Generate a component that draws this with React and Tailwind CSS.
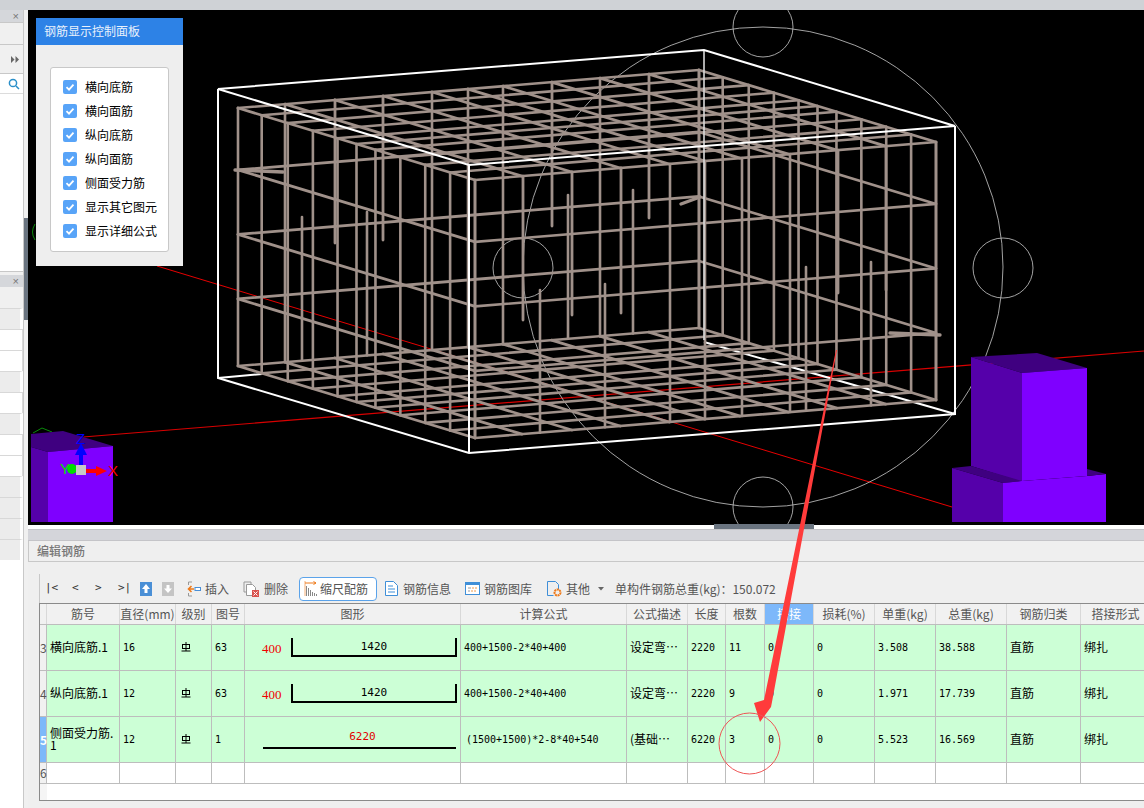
import React from "react";

const CJK = { fontFamily: '"Noto Sans CJK SC","Noto Sans",sans-serif' };
const MONO = { fontFamily: '"DejaVu Sans Mono","Noto Sans CJK SC",monospace' };

const A = [238, 108], U = [237, 72], V = [461, -38], H = 258;
const P = (u, v, w) => [A[0] + u * U[0] + v * V[0], A[1] + u * U[1] + v * V[1] + w * H];
const uList = [0, 0.1, 0.21, 0.316, 0.42, 0.5, 0.58, 0.685, 0.79, 0.895, 1];
const vList = [0, 0.102, 0.21, 0.315, 0.421, 0.499, 0.575, 0.68, 0.785, 0.891, 1];

function cageLines() {
  const out = [];
  const seg = (a, b, k = 2.6) => out.push([a[0], a[1], b[0], b[1], k]);
  // mats: top and bottom
  for (const w of [0, 1]) {
    for (const u of uList) seg(P(u, 0, w), P(u, 1, w));
    for (const v of vList) seg(P(0, v, w), P(1, v, w), 2.8);
  }
  // rings
  for (const w of [0.24, 0.49, 0.74]) {
    seg(P(0, 0, w), P(1, 0, w), 2.8);
    seg(P(1, 0, w), P(1, 1, w));
    seg(P(1, 1, w), P(0, 1, w));
    seg(P(0, 1, w), P(0, 0, w), 2.8);
  }
  // rods on side faces
  for (const u of uList) {
    seg(P(u, 0, 0), P(u, 0, 1), 2.6);
    seg(P(u, 1, 0), P(u, 1, 1), 2.6);
  }
  const backTop = (x) => 108 - ((x - 238) * 38) / 461;
  const backBot = (x) => backTop(x) + H;
  const frontTop = (x) => 180 - ((x - 475) * 38) / 461;
  const frontBot = (x) => frontTop(x) + H;
  for (const x of [285, 432, 468, 503, 600, 699]) seg([x, backTop(x)], [x, backBot(x)]);
  for (const [x, e] of [[335, 243], [383, 240], [552, 226], [649, 218]]) seg([x, backTop(x)], [x, e], 2.8);
  for (const x of [475, 670, 705, 742, 790, 936]) seg([x, frontTop(x)], [x, frontBot(x)], 2.6);
  for (const [x, e] of [[523, 320], [572, 315], [621, 313], [838, 293], [886, 290]]) seg([x, frontTop(x)], [x, e], 2.8);
  for (const [x, s] of [[302, 217], [367, 212], [568, 195], [633, 190]]) seg([x, s], [x, backBot(x)], 2.6);
  for (const [x, s] of [[540, 290], [605, 284], [806, 267], [871, 262]]) seg([x, s], [x, frontBot(x)], 2.6);
  // stubs
  seg([235, 170], [283, 172], 3.4);
  seg([681, 204], [700, 197], 3.4);
  seg([890, 333], [940, 335], 3.4);
  return out;
}

function Scene() {
  const lines = cageLines();
  return (
    <svg width="1116" height="515" viewBox="28 10 1116 515" className="absolute inset-0">
      <line x1="157" y1="266" x2="952" y2="507" stroke="#e60000" strokeWidth="1" />
      <line x1="83" y1="437" x2="1144" y2="351" stroke="#d80000" strokeWidth="1.2" />
      <g fill="none" stroke="#b4b4b4" strokeWidth="0.9">
        <circle cx="763" cy="267" r="240" />
        <circle cx="763" cy="27" r="30" />
        <circle cx="763" cy="507" r="30" />
        <circle cx="523" cy="268" r="30" />
        <circle cx="1003" cy="268" r="30" />
      </g>
      <g stroke="#fff" strokeWidth="2">
        <line x1="218" y1="378" x2="262" y2="374" />
        <line x1="704" y1="342" x2="955" y2="414" />
      </g>
      <g stroke="#a0918a" strokeLinecap="round">
        {lines.map((l, i) => (
          <line key={i} x1={l[0]} y1={l[1]} x2={l[2]} y2={l[3]} strokeWidth={l[4]} />
        ))}
      </g>
      <line x1="704" y1="50" x2="704" y2="340" stroke="#d8d8d8" strokeWidth="1.6" />
      <g stroke="#fff" strokeWidth="2" fill="none" strokeLinejoin="miter">
        <polygon points="218,89 704,50 955,126 469,165" />
        <polyline points="218,89 218,378 469,453 955,414 955,126" />
        <line x1="469" y1="165" x2="469" y2="453" />
      </g>
      {/* right purple column */}
      <polygon points="971,357 1037,353 1087,368 1022,373" fill="#3f0080" />
      <polygon points="971,357 1022,373 1022,482 971,466" fill="#5500aa" />
      <polygon points="1022,373 1087,368 1087,476 1022,481" fill="#7f00ff" />
      <polygon points="952,468 971,466 1022,481 1003,483" fill="#3f0080" />
      <polygon points="952,468 1003,483 1003,522 952,522" fill="#5500aa" />
      <polygon points="1003,483 1022,481 1087,476 1106,474 1106,522 1003,522" fill="#7f00ff" />
      <polygon points="1087,469 1106,474 1087,476" fill="#3f0080" />
      {/* left purple column */}
      <polyline points="33,433 42,428 52,432" fill="none" stroke="#0a8a0a" strokeWidth="1" />
      <path d="M35 224 Q30 232 35 240" fill="none" stroke="#0a8a0a" strokeWidth="1" />
      <polygon points="31,434 63,431 113,446 48,452 31,447" fill="#3f0080" />
      <polygon points="31,447 48,452 48,522 31,522" fill="#5500aa" />
      <polygon points="48,452 113,446 113,522 48,522" fill="#7f00ff" />
      {/* axes */}
      <rect x="79" y="454" width="4" height="14" fill="#0000ff" />
      <polygon points="81,443 75,455 87,455" fill="#0000ff" />
      <rect x="86" y="469" width="12" height="4" fill="#ff0000" />
      <polygon points="107,471 96,466 96,476" fill="#ff0000" />
      <circle cx="72" cy="469" r="5" fill="#00e000" />
      <rect x="76" y="465" width="10" height="10" fill="#c8c8c8" />
      <text x="76" y="444" fontSize="15" fill="#0000ff" style={{ fontFamily: '"Liberation Sans",sans-serif' }}>Z</text>
      <text x="108" y="476" fontSize="15" fill="#ff0000" style={{ fontFamily: '"Liberation Sans",sans-serif' }}>X</text>
      <text x="60" y="474" fontSize="15" fill="#00e000" style={{ fontFamily: '"Liberation Sans",sans-serif' }}>Y</text>
    </svg>
  );
}

function ControlPanel() {
  const items = ["横向底筋", "横向面筋", "纵向底筋", "纵向面筋", "侧面受力筋", "显示其它图元", "显示详细公式"];
  return (
    <div className="absolute left-[8px] top-[8px] w-[147px] h-[248px] bg-[#eeeeee]" style={CJK}>
      <div className="h-[27px] bg-[#2d82e6] text-[#e9f1fc] text-[12px] leading-[26px] pl-[8px]">钢筋显示控制面板</div>
      <div className="mx-[14px] mt-[22px] h-[185px] bg-white border border-[#c8c8c8] rounded-[3px] pt-[7px] pl-[12px] flex flex-col">
        {items.map((t) => (
          <div key={t} className="h-[24px] flex items-center gap-[8px] text-[12px] text-black">
            <span className="w-[14px] h-[14px] rounded-[2px] bg-[#58a4f8] flex items-center justify-center">
              <svg width="10" height="10" viewBox="0 0 10 10"><path d="M1.5 5.2 4 7.6 8.5 2.6" fill="none" stroke="#fff" strokeWidth="1.8" /></svg>
            </span>
            <span>{t}</span>
          </div>
        ))}
      </div>
    </div>
  );
}

const Close = () => <span className="text-[11px] leading-none text-[#777]" style={{ fontFamily: '"Liberation Sans",sans-serif' }}>×</span>;

function LeftColumn() {
  const rows = ["g", "w", "w", "g", "w", "g", "w", "w", "g", "g", "g", "g"];
  return (
    <div className="w-[24px] shrink-0 bg-white border-r border-[#c8c8c8] flex flex-col">
      <div className="h-[12px] bg-[#d5d7db] flex items-center justify-end pr-[4px]"><Close /></div>
      <div className="h-[22px] bg-[#f0f0f0] border-t border-[#c8c8c8]" />
      <div className="h-[30px] bg-[#f0f0f0] border-y border-[#c8c8c8] flex items-center justify-end pr-[4px]">
        <svg width="8" height="7" viewBox="0 0 8 7"><path d="M0 0l3.5 3.5L0 7zM4.5 0 8 3.5 4.5 7z" fill="#666" /></svg>
      </div>
      <div className="h-[19px] flex items-center justify-end pr-[3px]">
        <svg width="12" height="12" viewBox="0 0 12 12" fill="none" stroke="#2a8fc9" strokeWidth="1.5"><circle cx="5" cy="5" r="3.6" /><path d="M8 8l3 3" /></svg>
      </div>
      <div className="h-[178px] border-t border-[#dcdcdc]" />
      <div className="h-[4px] bg-[#f0f0f0] border-t border-[#c8c8c8]" />
      <div className="h-[12px] bg-[#d5d7db] flex items-center justify-end pr-[4px]"><Close /></div>
      <div className="h-[21px] bg-[#f0f0f0]" />
      {rows.map((r, i) => (
        <div key={i} className={r === "g" ? "h-[21px] bg-[#ececec] border-t border-[#d8d8d8] border-r-[3px] border-r-white" : "h-[21px] bg-white border-t border-[#d8d8d8] border-r border-r-[#d8d8d8]"} />
      ))}
    </div>
  );
}

function Grade() {
  return (
    <svg width="10" height="10" viewBox="0 0 10 10" fill="none" stroke="#000" strokeWidth="1" className="ml-[2px]">
      <rect x="1.5" y="2.5" width="7" height="4" />
      <path d="M5 0v9M0.5 9h9" />
    </svg>
  );
}

const colWidths = [7, 73, 56, 36, 33, 216, 166, 61, 38, 39, 49, 61, 61, 71, 74, 70];
const headers = ["", "筋号", "直径(mm)", "级别", "图号", "图形", "计算公式", "公式描述", "长度", "根数", "搭接", "损耗(%)", "单重(kg)", "总重(kg)", "钢筋归类", "搭接形式"];

function Shape({ left, mid, isLine }) {
  if (isLine) {
    return (
      <div className="ml-[18px] mb-[12px] w-[193px] h-[30px] border-b-2 border-black text-center text-[#e00000] text-[11px] leading-[20px] pt-[8px] pl-[6px]" style={MONO}>
        {mid}
      </div>
    );
  }
  return (
    <div className="flex items-center">
      <span className="w-[46px] pl-[17px] text-[13px] text-[#f00000] mt-[3px]" style={{ fontFamily: '"Liberation Serif",serif' }}>{left}</span>
      <div className="w-[166px] h-[19px] border-x-2 border-b-2 border-black text-center text-[11px] leading-[18px] text-black" style={MONO}>{mid}</div>
    </div>
  );
}

const data = [
  { n: "3", name: "横向底筋.1", d: "16", t: "63", left: "400", mid: "1420", f: "400+1500-2*40+400", fp: "!pl-[3px]", desc: "设定弯⋯", len: "2220", c: "11", w1: "3.508", w2: "38.588" },
  { n: "4", name: "纵向底筋.1", d: "12", t: "63", left: "400", mid: "1420", f: "400+1500-2*40+400", fp: "!pl-[3px]", desc: "设定弯⋯", len: "2220", c: "9", w1: "1.971", w2: "17.739" },
  { n: "5", name: <>侧面受力筋.<br />1</>, d: "12", t: "1", mid: "6220", isLine: true, f: "(1500+1500)*2-8*40+540", fp: "!pl-[5px]", desc: "(基础⋯", len: "6220", c: "3", w1: "5.523", w2: "16.569" },
];

function Cell({ children, mono, className = "" }) {
  return (
    <td className={"border border-[#bdbdbd] px-[3px] text-black align-middle overflow-hidden " + (mono ? "text-[10px] " : "text-[12px] pb-[2px] ") + className} style={mono ? MONO : CJK}>
      {children}
    </td>
  );
}

function RebarTable() {
  return (
    <div className="ml-[11px] h-[198px] bg-white border-y border-l border-[#8a8a8a] overflow-hidden">
      <table className="table-fixed border-collapse w-[1111px] -mt-px -ml-px">
        <colgroup>
          {colWidths.map((w, i) => <col key={i} style={{ width: w }} />)}
        </colgroup>
        <thead>
          <tr className="h-[21px] bg-[#f1f1f1]">
            {headers.map((h, i) => (
              <th key={i} className={"border border-[#d8d8d8] border-b-[#bdbdbd] font-normal text-[12px] p-0 whitespace-nowrap overflow-hidden " + (h === "搭接" ? "bg-[#7db8fa] text-white" : "text-[#555]")} style={CJK}>{h}</th>
            ))}
          </tr>
        </thead>
        <tbody>
          {data.map((r) => (
            <tr key={r.n} className="h-[46px] bg-[#ccffd6]">
              <td className={"border border-[#bdbdbd] p-0 text-center text-[12px] " + (r.n === "5" ? "bg-[#7db8fa] text-white font-bold" : "bg-[#f1f1f1] text-[#555]")} style={CJK}>{r.n}</td>
              <Cell className="leading-[12px] whitespace-nowrap">{r.name}</Cell>
              <Cell mono>{r.d}</Cell>
              <Cell><Grade /></Cell>
              <Cell mono>{r.t}</Cell>
              <td className="border border-[#bdbdbd] p-0"><Shape left={r.left} mid={r.mid} isLine={r.isLine} /></td>
              <Cell mono className={r.fp + " !pr-0 whitespace-nowrap"}>{r.f}</Cell>
              <Cell className="whitespace-nowrap">{r.desc}</Cell>
              <Cell mono>{r.len}</Cell>
              <Cell mono>{r.c}</Cell>
              <Cell mono>0</Cell>
              <Cell mono>0</Cell>
              <Cell mono>{r.w1}</Cell>
              <Cell mono>{r.w2}</Cell>
              <Cell>直筋</Cell>
              <Cell>绑扎</Cell>
            </tr>
          ))}
          <tr className="h-[21px] bg-white">
            <td className="border border-[#bdbdbd] p-0 bg-[#f1f1f1] text-center text-[12px] text-[#555]" style={CJK}>6</td>
            {colWidths.slice(1).map((_, i) => <td key={i} className="border border-[#bdbdbd]" />)}
          </tr>
        </tbody>
      </table>
      <div className="w-[7px] h-[20px] bg-[#f5f5f5]" />
    </div>
  );
}

const IconUp = ({ off }) => (
  <svg width="12" height="14" viewBox="0 0 12 14">
    <rect width="12" height="14" fill={off ? "#c4c4c4" : "#4a8fd6"} />
    <path d={off ? "M6 11 2 6.5h2.5V3h3v3.5H10z" : "M6 2 10 7H7.5v4h-3V7H2z"} fill="#fff" />
  </svg>
);
const IconInsert = () => (
  <svg width="14" height="16" viewBox="0 0 14 16" fill="none">
    <path d="M1.5 4V1H5M1.5 12v3H5" stroke="#999" />
    <path d="M7 8H2M4.5 5 1.5 8l3 3" stroke="#ee7a1a" strokeWidth="1.6" />
    <rect x="8" y="6.5" width="5.5" height="3" fill="#fff" stroke="#4a8fd6" />
  </svg>
);
const IconDelete = () => (
  <svg width="16" height="16" viewBox="0 0 16 16" fill="none">
    <path d="M1 1h7v2M1 1v10h2" stroke="#999" />
    <path d="M3.5 3.5h6l3 3v8h-9z" fill="#fff" stroke="#999" />
    <rect x="9" y="9" width="7" height="7" fill="#d9534f" />
    <path d="M10.5 10.5l4 4M14.5 10.5l-4 4" stroke="#fff" />
  </svg>
);
const IconScale = () => (
  <svg width="13" height="15" viewBox="0 0 13 15" fill="none">
    <path d="M1 2h11M9.5 0.5 12 2 9.5 3.5" stroke="#ee7a1a" />
    <path d="M1 0v15" stroke="#ee7a1a" strokeOpacity="0.6" />
    <path d="M2.5 5v10M4.5 7v8M6.5 9v6M8.5 11v4M10.5 12v3M12.5 13v2" stroke="#888" />
  </svg>
);
const IconDoc = () => (
  <svg width="13" height="15" viewBox="0 0 13 15" fill="none" stroke="#3f8fd8">
    <path d="M0.5 0.5h8l4 4v10h-12z" fill="#fff" />
    <path d="M3 5h5M3 8h7M3 11h7" />
  </svg>
);
const IconLib = () => (
  <svg width="15" height="13" viewBox="0 0 15 13" fill="none">
    <rect x="0.5" y="0.5" width="14" height="12" fill="#fff" stroke="#3f8fd8" />
    <rect x="1" y="1" width="13" height="2" fill="#3f8fd8" />
    <path d="M3 6h3M3 9h2" stroke="#999" />
    <path d="M7 6h5M6 9h6" stroke="#ee9a4a" strokeDasharray="2 1" />
  </svg>
);
const IconOther = () => (
  <svg width="15" height="16" viewBox="0 0 15 16" fill="none">
    <path d="M0.5 0.5h8l3 3v5M0.5 0.5v14h6" stroke="#3f8fd8" />
    <circle cx="10.5" cy="11.5" r="3" stroke="#ee7a1a" strokeWidth="2" strokeDasharray="2 0.6" />
  </svg>
);

function Toolbar() {
  const label = "text-[12px] text-[#555]";
  const nav = "text-[11px] text-[#333]";
  return (
    <div className="h-[41px] pt-[12px] ml-[11px] flex items-center" style={CJK}>
      <div className="h-[29px] w-full border-l border-[#c8c8c8] flex items-center">
        <span className={nav + " ml-[5px] w-[27px]"} style={MONO}>|&lt;</span>
        <span className={nav + " w-[23px]"} style={MONO}>&lt;</span>
        <span className={nav + " w-[23px]"} style={MONO}>&gt;</span>
        <span className={nav + " w-[22px]"} style={MONO}>&gt;|</span>
        <IconUp />
        <span className="w-[10px]" />
        <IconUp off />
        <span className="w-[13px]" />
        <IconInsert />
        <span className={label + " ml-[4px]"}>插入</span>
        <span className="w-[14px]" />
        <IconDelete />
        <span className={label + " ml-[5px]"}>删除</span>
        <span className="w-[11px]" />
        <div className="w-[78px] h-[24px] bg-white border border-[#5ba3ea] rounded-[4px] flex items-center pl-[4px] gap-[3px]">
          <IconScale />
          <span className={label}>缩尺配筋</span>
        </div>
        <span className="w-[8px]" />
        <IconDoc />
        <span className={label + " ml-[5px]"}>钢筋信息</span>
        <span className="w-[14px]" />
        <IconLib />
        <span className={label + " ml-[4px]"}>钢筋图库</span>
        <span className="w-[15px]" />
        <IconOther />
        <span className={label + " ml-[4px]"}>其他</span>
        <svg width="6" height="4" viewBox="0 0 6 4" className="ml-[8px]"><path d="M0 0h6L3 3.5z" fill="#666" /></svg>
        <span className={label + " ml-[11px] whitespace-nowrap"}>单构件钢筋总重(kg)：150.072</span>
      </div>
    </div>
  );
}

export default function App() {
  return (
    <div className="relative w-[1144px] h-[808px] bg-[#efefef] overflow-hidden flex flex-col" style={CJK}>
      <div className="h-[10px] shrink-0 bg-[#cfd2d6]" />
      <div className="flex flex-1 min-h-0">
        <LeftColumn />
        <div className="w-[4px] shrink-0 bg-[#f0f0f0] flex flex-col">
          <div className="h-[208px]" />
          <div className="h-[102px] bg-[#6a7480]" />
        </div>
        <div className="flex-1 flex flex-col min-w-0">
          <div className="relative h-[515px] shrink-0 bg-black overflow-hidden">
            <Scene />
            <ControlPanel />
          </div>
          <div className="relative h-[4px] shrink-0 bg-white">
            <div className="absolute left-[686px] -top-[1px] w-[100px] h-[5px] bg-[#6a7480]" />
          </div>
          <div className="h-[12px] shrink-0 bg-[#d4d5da] border-y border-[#c4c4c8]" />
          <div className="h-[21px] shrink-0 bg-[#efefef] border-b border-l border-[#c8c8c8] pl-[8px] text-[12px] leading-[20px] text-[#777] font-medium">编辑钢筋</div>
          <Toolbar />
          <RebarTable />
        </div>
      </div>
      <svg width="1144" height="808" className="absolute left-0 top-0 pointer-events-none">
        <polygon points="836,350 837,350 772,702 771,707 760,722 754,703 764,700" fill="#ff3b3b" />
        <circle cx="749.5" cy="743.5" r="30.5" fill="none" stroke="#ee5555" strokeWidth="1" />
      </svg>
    </div>
  );
}
